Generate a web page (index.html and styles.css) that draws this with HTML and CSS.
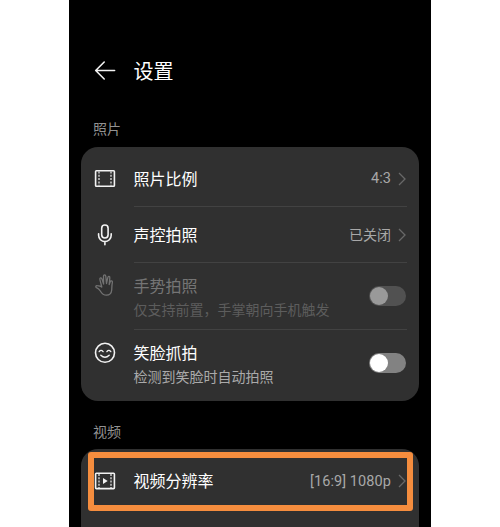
FILE: index.html
```
<!DOCTYPE html>
<html lang="zh-CN">
<head>
<meta charset="utf-8">
<title>设置</title>
<link rel="stylesheet" href="styles.css">
</head>
<body>
<main class="phone">
  <header class="header">
    <svg class="icon" viewBox="0 0 22 22"><path d="M20.6 10.5H1.8M10.2 2L1.7 10.5l8.5 8.5"/></svg>
    <h1 class="title">设置</h1>
  </header>

  <h2 class="section">照片</h2>
  <section class="card">
    <div class="row row-first">
      <svg class="icon" viewBox="0 0 22 22"><rect x="1.6" y="2.8" width="18.8" height="15.4" rx=".8"/><path class="perforation" d="M5 3.5v14M17 3.5v14"/></svg>
      <div class="body"><span class="label">照片比例</span><span class="value ratio">4:3</span><svg class="chevron" viewBox="0 0 8 14"><path d="M1 1l6 6-6 6"/></svg></div>
    </div>
    <div class="row row-second">
      <svg class="icon" viewBox="0 0 22 22"><rect x="7.7" y="1" width="6.4" height="13" rx="3.2"/><path d="M4.6 9.8v1.5a6.3 6.3 0 0 0 12.6 0V9.8M10.9 17.6v3.2"/></svg>
      <div class="body"><span class="label">声控拍照</span><span class="value">已关闭</span><svg class="chevron" viewBox="0 0 8 14"><path d="M1 1l6 6-6 6"/></svg></div>
    </div>
    <div class="row row-tall disabled">
      <svg class="icon hand" viewBox="0 0 22 22"><path d="M7.8 13L5.9 5.6c-.4-1.9 1.6-2.3 2.1-.6l1.6 5L9.5 2.4c0-2 2.1-2 2.3 0l.7 7.1 1.3-5.9c.4-1.8 2.3-1.4 2 .4l-.6 6.6 1-2.8c.7-1.6 2.5-1 2.2.6-.7 3.5-.4 4.1-.7 7.6-.3 3.2-2.2 5.2-5.2 5.2-3.2 0-4.6-1.5-6.2-4.2-1-1.7-2-2.6-3.8-3.4-1.4-.7-.6-2.2.8-2 1.9.2 3.2.5 4.5 1.4"/></svg>
      <div class="body"><div class="text"><span class="label">手势拍照</span><span class="note">仅支持前置，手掌朝向手机触发</span></div><span class="switch"></span></div>
    </div>
    <div class="row row-tall row-last">
      <svg class="icon" viewBox="0 0 22 22"><circle cx="11" cy="10.8" r="9.5"/><path class="face" d="M5.2 9.6q1.8-2.4 3.9 0M12.9 9.6q1.9-2.4 3.9 0M6.8 13.3q4.2 4 8.4 0"/></svg>
      <div class="body"><div class="text"><span class="label">笑脸抓拍</span><span class="note">检测到笑脸时自动拍照</span></div><span class="switch"></span></div>
    </div>
  </section>

  <h2 class="section section-video">视频</h2>
  <section class="card card-video">
    <div class="row row-video">
      <svg class="icon" viewBox="0 0 22 22"><rect x="1.6" y="3.2" width="18.8" height="15.4" rx=".8"/><path class="perforation" d="M5 3.9v14M17 3.9v14"/><path class="play" d="M9 8v6l4.7-3z"/></svg>
      <div class="body"><span class="label">视频分辨率</span><span class="value resolution">[16:9] 1080p</span><svg class="chevron" viewBox="0 0 8 14"><path d="M1 1l6 6-6 6"/></svg></div>
    </div>
    <div class="highlight"></div>
  </section>
</main>
</body>
</html>
```
FILE: styles.css
```
* { box-sizing: border-box; }
body {
  margin: 0;
  background: #fff;
  font-family: "Noto Sans CJK SC", sans-serif;
}
.phone {
  width: 362px;
  height: 527px;
  margin-left: 69px;
  padding: 0 12px;
  overflow: hidden;
  background: #000;
  color: #fff;
}
.header {
  display: flex;
  align-items: center;
  gap: 17.5px;
  height: 98px;
  padding: 44px 0 0 13px;
}
.title {
  margin: 0;
  font-size: 20px;
  font-weight: 400;
  line-height: 30px;
}
.icon {
  flex: none;
  width: 22px;
  height: 22px;
  fill: none;
  stroke: #f2f2f2;
  stroke-width: 1.6;
  stroke-linecap: round;
  stroke-linejoin: round;
}
.section {
  height: 49px;
  margin: 0;
  padding: 20px 0 0 12px;
  color: #929292;
  font-size: 14px;
  font-weight: 400;
  line-height: 20px;
}
.section-video { height: 48px; }
.card {
  height: 254px;
  border-radius: 17px;
  background: #303030;
}
.card-video { position: relative; height: 100px; }
.row { display: flex; gap: 17.5px; padding-left: 13px; }
.row > .icon { align-self: center; }
.body {
  display: flex;
  flex: 1;
  align-items: center;
  margin-right: 12px;
  border-bottom: 1px solid #424242;
}
.row-first { height: 60px; }
.row-first .body { padding-top: 4px; }
.row-first .icon { margin-top: 4px; }
.row-second { height: 56px; }
.row-tall { height: 67px; }
.row-tall > .icon { align-self: flex-start; margin-top: 11px; }
.row-last { height: 66px; }
.row-last > .icon { margin-top: 12px; }
.row-last .body, .row-video .body { border-bottom: 0; }
.row-video { height: 64px; }
.label {
  font-size: 16px;
  line-height: 24px;
  white-space: nowrap;
}
.body > .label { padding-bottom: 2px; }
.value {
  margin-left: auto;
  padding-bottom: 2px;
  color: #a8a8a8;
  font-size: 14px;
  line-height: 22px;
  white-space: nowrap;
}
.ratio, .resolution {
  padding: 1px 0 0;
  font-family: Roboto, "Noto Sans CJK SC", sans-serif;
  font-size: 14.5px;
  letter-spacing: .08px;
}
.chevron {
  width: 8px;
  height: 14px;
  margin: 0 1px 0 7px;
  fill: none;
  stroke: #686868;
  stroke-width: 1.3;
}
.text { display: flex; flex-direction: column; padding-top: 2px; }
.note { color: #aaa; font-size: 14px; line-height: 24px; white-space: nowrap; }
.disabled .label { color: #757575; }
.disabled .note { color: #5d5d5d; }
.disabled .icon { stroke: #727272; stroke-width: 1.3; }
.switch {
  width: 37px;
  height: 20px;
  margin: 0 1px 0 auto;
  padding: 1px;
  border-radius: 10px;
  background: #828282;
}
.switch::before {
  content: "";
  display: block;
  width: 18px;
  height: 18px;
  border-radius: 50%;
  background: #fff;
}
.disabled .switch { background: #515151; }
.disabled .switch::before { background: #999; }
.perforation { stroke-width: 1.2; stroke-linecap: butt; stroke-dasharray: 2 1.3; }
.face { stroke-width: 1.4; }
.play { fill: #f2f2f2; stroke: none; }
.highlight {
  position: absolute;
  top: 3px;
  left: 7px;
  width: 325px;
  height: 59px;
  border: 6.5px solid #f58d3e;
  border-radius: 3px;
}
```
